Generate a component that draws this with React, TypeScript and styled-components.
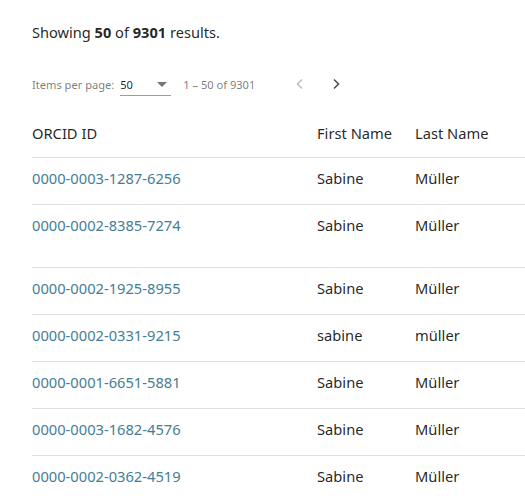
import React from "react";
import styled, { createGlobalStyle } from "styled-components";

const Global = createGlobalStyle`
  html, body { margin: 0; padding: 0; overflow: hidden; background: #fff; }
  body { font-family: "Noto Sans", "Open Sans", sans-serif; color: rgba(0,0,0,0.87); }
`;

const Page = styled.div`
  padding: 22px 0 0 32px;
  width: 640px;
`;

const Summary = styled.p`
  margin: 0;
  font-size: 14.6px;
  line-height: 20px;
  color: rgba(0,0,0,0.87);
  b { font-weight: 700; }
`;

const Paginator = styled.div`
  display: flex;
  align-items: center;
  height: 40px;
  margin-top: 22px;
  font-size: 11.1px;
  color: rgba(0,0,0,0.54);
`;

const Label = styled.span`
  margin-right: 6px;
`;

const Select = styled.div`
  display: flex;
  align-items: center;
  justify-content: space-between;
  width: 51px;
  height: 22px;
  margin-top: 2px;
  border-bottom: 1px solid #9e9e9e;
  color: rgba(0,0,0,0.87);
  box-sizing: border-box;
  padding-right: 4px;
`;

const Arrow = styled.span`
  width: 0;
  height: 0;
  border-left: 5px solid transparent;
  border-right: 5px solid transparent;
  border-top: 5px solid rgba(0,0,0,0.54);
`;

const Range = styled.span`
  margin-left: 12px;
`;

const NavButton = styled.button<{ $disabled?: boolean }>`
  background: none;
  border: 0;
  padding: 0;
  width: 36px;
  height: 36px;
  display: flex;
  align-items: center;
  justify-content: center;
  color: ${(p) => (p.$disabled ? "rgba(0,0,0,0.26)" : "rgba(0,0,0,0.7)")};
`;

const Nav = styled.div`
  display: flex;
  margin-left: 27px;
`;

const Table = styled.div`
  margin-top: 19px;
`;

const Row = styled.div<{ $head?: boolean; $tall?: boolean }>`
  display: grid;
  grid-template-columns: 285px 98px 1fr;
  align-items: start;
  box-sizing: border-box;
  height: ${(p) => (p.$head ? 35 : p.$tall ? 63 : 47)}px;
  padding-top: ${(p) => (p.$head ? 0 : 10)}px;
  border-bottom: 1px solid #e0e0e0;
  font-size: 14.7px;
  line-height: 20px;
`;

const Cell = styled.div<{ $link?: boolean }>`
  color: ${(p) => (p.$link ? "#457d95" : "rgba(0,0,0,0.87)")};
  white-space: nowrap;
`;

const Chevron = ({ dir }: { dir: "left" | "right" }) => (
  <svg width="14" height="14" viewBox="0 0 14 14" fill="none">
    <path
      d={dir === "left" ? "M9 2.5 L4.5 7 L9 11.5" : "M5 2.5 L9.5 7 L5 11.5"}
      stroke="currentColor"
      strokeWidth="1.6"
    />
  </svg>
);

const rows = [
  ["0000-0003-1287-6256", "Sabine", "Müller"],
  ["0000-0002-8385-7274", "Sabine", "Müller"],
  ["0000-0002-1925-8955", "Sabine", "Müller"],
  ["0000-0002-0331-9215", "sabine", "müller"],
  ["0000-0001-6651-5881", "Sabine", "Müller"],
  ["0000-0003-1682-4576", "Sabine", "Müller"],
  ["0000-0002-0362-4519", "Sabine", "Müller"],
];

export default function App() {
  return (
    <>
      <Global />
      <Page>
        <Summary>
          Showing <b>50</b> of <b>9301</b> results.
        </Summary>
        <Paginator>
          <Label>Items per page:</Label>
          <Select>
            <span>50</span>
            <Arrow />
          </Select>
          <Range>1 – 50 of 9301</Range>
          <Nav>
            <NavButton $disabled aria-label="Previous page">
              <Chevron dir="left" />
            </NavButton>
            <NavButton aria-label="Next page">
              <Chevron dir="right" />
            </NavButton>
          </Nav>
        </Paginator>
        <Table>
          <Row $head>
            <Cell>ORCID ID</Cell>
            <Cell>First Name</Cell>
            <Cell>Last Name</Cell>
          </Row>
          {rows.map((r, i) => (
            <Row key={r[0]} $tall={i === 1}>
              <Cell $link>{r[0]}</Cell>
              <Cell>{r[1]}</Cell>
              <Cell>{r[2]}</Cell>
            </Row>
          ))}
        </Table>
      </Page>
    </>
  );
}
